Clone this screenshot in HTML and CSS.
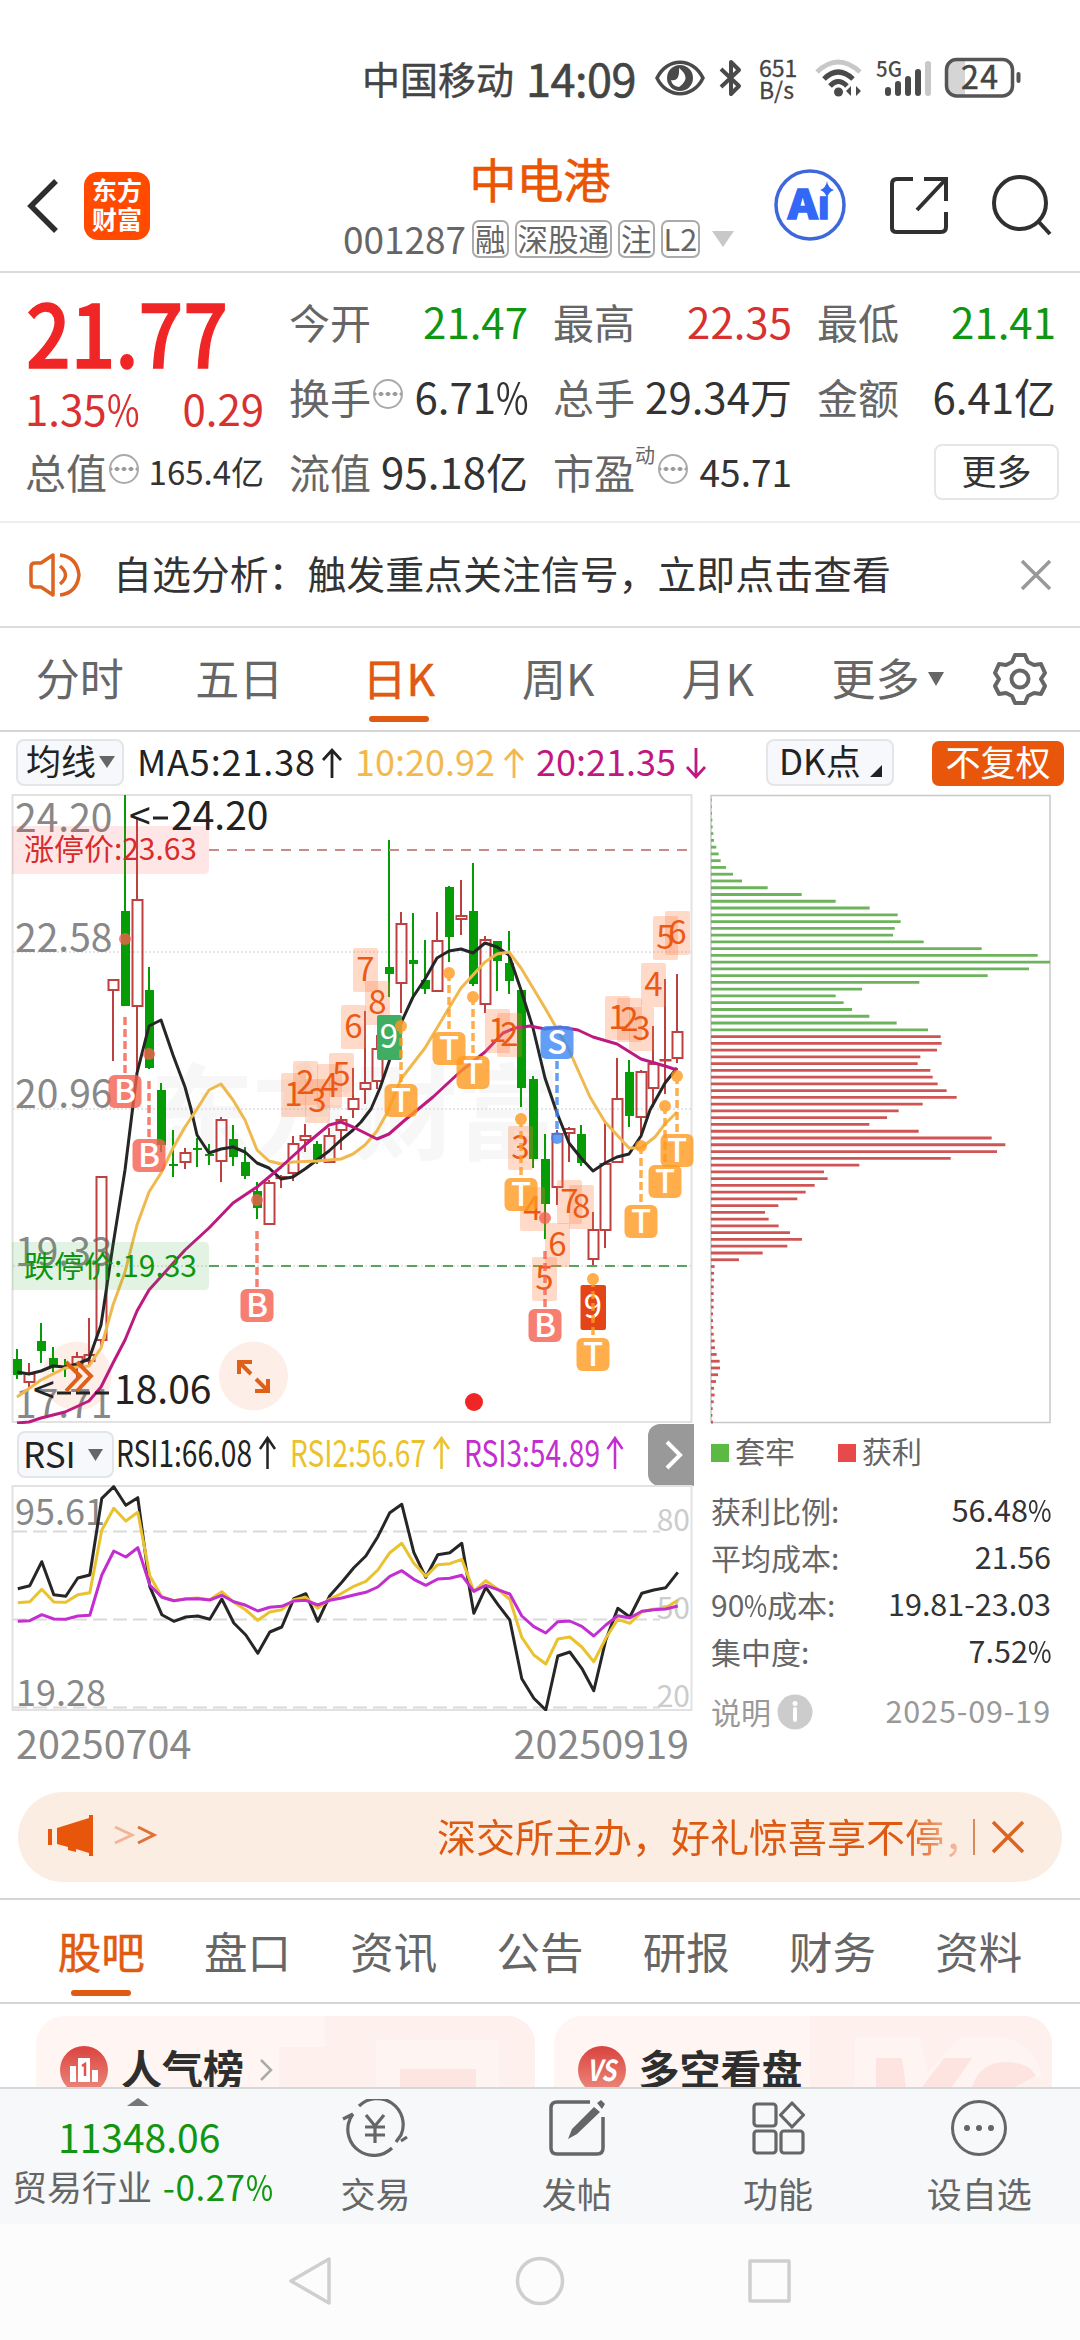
FILE: index.html
```html
<!DOCTYPE html>
<html lang="zh-CN">
<head>
    <meta charset="UTF-8">
    <meta name="viewport" content="width=device-width, initial-scale=1.0">
    <title>中电港 001287</title>
    <link rel="stylesheet" href="styles.css">
</head>
<body>
    <div class="status-bar">
        <span class="carrier">中国移动</span>
        <span class="clock">14:09</span>
        <svg class="st-eye" width="50" height="36" viewBox="0 0 50 36"><path d="M2 18C12 -3 38 -3 48 18C38 39 12 39 2 18Z" fill="none" stroke="#4a4a4a" stroke-width="3.500"/><circle cx="25" cy="18" r="13" fill="#4a4a4a"/><path d="M24 8Q37 18 24 27Q17 26 16 20Q25 22 24 8Z" fill="#fff"/></svg>
        <svg class="st-bt" width="24" height="38" viewBox="0 0 24 38"><path d="M2 10L20 27L12 35V3L20 11L2 28" fill="none" stroke="#4a4a4a" stroke-width="4" stroke-linejoin="round"/></svg>
        <span class="net-speed">651<br>B/s</span>
        <svg class="st-wifi" width="48" height="38" viewBox="0 0 48 38"><g fill="none" stroke-width="5"><path d="M2 13Q23-7 45 13" stroke="#c8c8c8"/><path d="M9 20Q23 6 38 20" stroke="#4a4a4a"/><path d="M15 27Q23 18 32 27" stroke="#4a4a4a"/></g><circle cx="23.500" cy="33" r="4.500" fill="#4a4a4a"/><path d="M31 32l5-5v10zM46 32l-5-5v10z" fill="#4a4a4a"/></svg>
        <svg class="st-signal" width="56" height="38" viewBox="0 0 56 38"><text x="0" y="18" font-size="22" font-weight="500" textLength="26" lengthAdjust="spacingAndGlyphs" fill="#4a4a4a">5G</text><g stroke-width="6" stroke-linecap="round"><path d="M12 34V31M22 34V25M32 34V20M42 34V13" stroke="#4a4a4a"/><path d="M52 34V5" stroke="#c8c8c8"/></g></svg>
        <svg class="st-battery" width="78" height="42" viewBox="0 0 78 42"><path d="M12 3H21V39H12Q2 39 2 29V13Q2 3 12 3Z" fill="#d5d5d5"/><rect x="2.500" y="2.500" width="66" height="36.500" rx="10" fill="none" stroke="#555" stroke-width="3.500"/><rect x="72.500" y="15" width="4" height="11" rx="2" fill="#555"/><text x="17" y="32" font-size="32" textLength="37" fill="#444" stroke="#444" stroke-width=".5">24</text></svg>
    </div>

    <div class="header">
        <div class="header-left">
            <svg width="34" height="56" viewBox="0 0 34 56"><path d="M30 3L5 28L30 53" fill="none" stroke="#2e2e2e" stroke-width="5.500"/></svg>
            <div class="logo">东方<br>财富</div>
        </div>
        <div class="header-title">
            <h1>中电港</h1>
            <div class="stock-code">
                <span>001287</span>
                <i class="tag">融</i><i class="tag">深股通</i><i class="tag">注</i><i class="tag">L2</i>
                <svg width="24" height="16" viewBox="0 0 24 16"><path d="M1 0H23L12 16Z" fill="#c8c8c8"/></svg>
            </div>
        </div>
        <div class="header-right">
            <svg width="74" height="74" viewBox="0 0 74 74"><circle cx="37" cy="37" r="34" fill="none" stroke="#3d68dc" stroke-width="3.500"/><text x="15" y="51" font-size="40" font-weight="900" fill="#3268f5" stroke="#3268f5" stroke-width="1.500" textLength="42" lengthAdjust="spacingAndGlyphs">Aı</text><path d="M54 13Q55 20 61 22Q55 24 54 31Q53 24 47 22Q53 20 54 13Z" fill="#3268f5"/></svg>
            <svg width="60" height="60" viewBox="0 0 60 60"><g fill="none" stroke="#303030" stroke-width="4"><path d="M24 4H8Q3 4 3 9V53Q3 57 8 57H52Q57 57 57 52V37"/><path d="M35 4H57V26M57 4L28 35"/></g></svg>
            <svg width="62" height="62" viewBox="0 0 62 62"><g fill="none" stroke="#303030" stroke-width="4"><circle cx="29" cy="29" r="26"/><path d="M47 47L59 60"/></g></svg>
        </div>
    </div>

    <div class="quote">
        <div class="price">21.77</div>
        <div class="q"><label>今开</label><b class="down">21.47</b></div>
        <div class="q"><label>最高</label><b class="up">22.35</b></div>
        <div class="q"><label>最低</label><b class="down">21.41</b></div>
        <div class="q change"><b class="up">1.35<em>%</em></b><b class="up">0.29</b></div>
        <div class="q"><label>换手</label><span class="more-dots"></span><b>6.71<em>%</em></b></div>
        <div class="q"><label>总手</label><b>29.34万</b></div>
        <div class="q"><label>金额</label><b>6.41亿</b></div>
        <div class="q"><label>总值</label><span class="more-dots"></span><b class="s">165.4亿</b></div>
        <div class="q"><label>流值</label><b>95.18亿</b></div>
        <div class="q"><label>市盈</label><sup>动</sup><span class="more-dots"></span><b class="m">45.71</b></div>
        <div class="q"><button class="btn-more">更多</button></div>
    </div>

    <div class="notice">
        <svg width="54" height="46" viewBox="0 0 54 46"><g fill="none" stroke="#dd6420" stroke-width="3.500"><path d="M24 3V43L12 35H6Q2 35 2 31V15Q2 11 6 11H12Z" stroke-linejoin="round"/><path d="M31 14Q42 23 31 32M31 3Q48 5 50 23Q48 41 31 43"/></g></svg>
        <p>自选分析：触发重点关注信号，立即点击查看</p>
        <svg width="32" height="32" viewBox="0 0 32 32"><path d="M2 2L30 30M30 2L2 30" stroke="#999" stroke-width="3.500"/></svg>
    </div>

    <div class="k-tabs">
        <span>分时</span><span>五日</span><span class="active">日K</span><span>周K</span><span>月K</span><span>更多<svg width="16" height="14" viewBox="0 0 16 14"><path d="M0 0H16L8 14Z" fill="#666"/></svg></span>
        <svg class="gear" width="54" height="54" viewBox="0 0 54 54"><g fill="none" stroke="#666" stroke-width="4" stroke-linejoin="round"><path d="M22 3H32L35 10L41 13L48 12L52 21L48 27L52 34L48 42L41 41L35 44L32 51H22L19 44L13 41L6 42L2 34L6 27L2 21L6 12L13 13L19 10Z"/><circle cx="27" cy="27" r="8.500"/></g></svg>
    </div>

    <div class="market">
        <div class="market-left">
            <div class="ma-bar">
                <div class="select">均线<svg width="16" height="12" viewBox="0 0 16 12"><path d="M0 0H16L8 12Z" fill="#666"/></svg></div>
                <svg class="ma-text" width="580" height="46" viewBox="0 0 580 46">
                    <g font-size="36"><text x="9" y="37" textLength="178" fill="#222">MA5:21.38</text><text x="227" y="37" textLength="140" fill="#f3b94e">10:20.92</text><text x="408" y="37" textLength="140" fill="#c0187f">20:21.35</text></g>
                    <g fill="none" stroke-width="2.800"><path d="M204 39V11M195 21L204 11L213 21" stroke="#222"/><path d="M386 39V11M377 21L386 11L395 21" stroke="#f3b94e"/><path d="M568 9V38M559 28L568 38L577 28" stroke="#c0187f"/></g>
                </svg>
            </div>
            <svg id="kline" class="chart" width="684" height="630" viewBox="10 794 684 630"></svg>
            <div class="rsi-bar">
                <div class="select">RSI<svg width="15" height="12" viewBox="0 0 15 12"><path d="M0 0H15L7.500 12Z" fill="#666"/></svg></div>
                <svg class="rsi-text" width="530" height="46" viewBox="116 1431 530 46">
                    <g font-size="37"><text x="116" y="1467" textLength="136" lengthAdjust="spacingAndGlyphs" fill="#222">RSI1:66.08</text><text x="290" y="1467" textLength="136" lengthAdjust="spacingAndGlyphs" fill="#ebc22c">RSI2:56.67</text><text x="464" y="1467" textLength="136" lengthAdjust="spacingAndGlyphs" fill="#c32ed0">RSI3:54.89</text></g>
                    <g fill="none" stroke-width="2.500"><path d="M267.500 1469V1438M260 1449L267.500 1438L275 1449" stroke="#222"/><path d="M441.500 1469V1438M434 1449L441.500 1438L449 1449" stroke="#ebc22c"/><path d="M615 1469V1438M607.500 1449L615 1438L622.500 1449" stroke="#c32ed0"/></g>
                </svg>
                <div class="next"><svg width="20" height="30" viewBox="0 0 20 30"><path d="M3 2L16 15L3 28" fill="none" stroke="#fff" stroke-width="4"/></svg></div>
            </div>
            <svg id="rsi" class="chart" width="684" height="226" viewBox="10 1485 684 226"></svg>
            <div class="dates"><span>20250704</span><span>20250919</span></div>
        </div>
        <div class="market-right">
            <div class="chip-bar">
                <div class="dk">DK点<svg width="12" height="12" viewBox="0 0 12 12"><path d="M12 0V12H0Z" fill="#222"/></svg></div>
                <div class="fq">不复权</div>
            </div>
            <svg id="chips" class="chart" width="342" height="630" viewBox="710 794 342 630"></svg>
            <div class="legend"><i class="g"></i>套牢<i class="r"></i>获利</div>
            <div class="cost"><span>获利比例:</span><b>56.48<em>%</em></b></div>
            <div class="cost"><span>平均成本:</span><b>21.56</b></div>
            <div class="cost"><span>90<em>%</em>成本:</span><b>19.81-23.03</b></div>
            <div class="cost"><span>集中度:</span><b>7.52<em>%</em></b></div>
            <div class="cost note"><span>说明</span><svg width="36" height="36" viewBox="0 0 36 36"><circle cx="18" cy="18" r="17.500" fill="#ccc"/><path d="M18 15V26" stroke="#fff" stroke-width="4" stroke-linecap="round"/><circle cx="18" cy="9.500" r="2.500" fill="#fff"/></svg><b>2025-09-19</b></div>
        </div>
    </div>

    <div class="banner">
        <svg width="110" height="44" viewBox="0 0 110 44"><path d="M0 14H4V30H0ZM9 13L41 3V0H45V41H41V38L28 34V37L20 35V32L9 29Z" fill="#e8560c"/><g fill="none" stroke-width="3"><path d="M67 12L84 20L67 28" stroke="#f2b596"/><path d="M90 12L106 20L90 28" stroke="#e07035"/></g></svg>
        <p>深交所主办，好礼惊喜享不停，</p>
        <i></i>
        <svg width="34" height="34" viewBox="0 0 34 34"><path d="M2 2L32 32M32 2L2 32" stroke="#dd6420" stroke-width="3.500"/></svg>
    </div>

    <div class="info-tabs">
        <span class="active">股吧</span><span>盘口</span><span>资讯</span><span>公告</span><span>研报</span><span>财务</span><span>资料</span>
    </div>

    <div class="cards">
        <div class="card">
            <svg width="48" height="48" viewBox="0 0 48 48"><defs><linearGradient id="badge" x1="0" y1="0" x2="0" y2="1"><stop offset="0" stop-color="#d9443f"/><stop offset="1" stop-color="#ee8c80"/></linearGradient></defs><circle cx="24" cy="24" r="24" fill="url(#badge)"/><path d="M10 20H16V36H10ZM18 12H30V36H18ZM32 24H38V36H32Z" fill="#fff"/><path d="M22 20L25 18V30" fill="none" stroke="#e0524b" stroke-width="2.500"/></svg>
            <span>人气榜</span>
            <svg width="14" height="24" viewBox="0 0 14 24"><path d="M2 2L12 12L2 22" fill="none" stroke="#aaa" stroke-width="2.500"/></svg>
            <svg class="card-bg" width="256" height="71" viewBox="0 0 256 71"><path d="M46 0H256V71H0V31H46Z" fill="#fef0ec"/><path d="M97 24H220V71H97Z" fill="#fef4f1"/><path d="M121 53H197V71H121Z" fill="#fde6e2"/></svg>
        </div>
        <div class="card">
            <svg width="48" height="48" viewBox="0 0 48 48"><circle cx="24" cy="24" r="24" fill="url(#badge)"/><text x="9" y="35" font-size="29" font-weight="700" font-style="italic" textLength="29" lengthAdjust="spacingAndGlyphs" fill="#fff">VS</text></svg>
            <span>多空看盘</span>
            <svg class="card-bg" width="242" height="71" viewBox="0 0 242 71"><path d="M0 0H242V71H0Z" fill="#fef0ec"/><path d="M45 21H110L118 56L150 21H190Q225 26 232 60L200 71H45Z" fill="#fef4f1"/><path d="M66 42H92L96 71H66ZM112 71L134 42H162L142 71ZM162 71Q170 46 196 46Q220 47 226 60L205 71Z" fill="#fde4e0"/></svg>
        </div>
    </div>

    <div class="bottom-bar">
        <div class="index">
            <svg width="22" height="8" viewBox="0 0 22 8"><path d="M11 0L22 8H0Z" fill="#777"/></svg>
            <div class="index-value">11348.06</div>
            <div class="index-name">贸易行业 <b>-0.27<em>%</em></b></div>
        </div>
        <div class="action">
            <svg width="66" height="58" viewBox="0 0 66 58"><g fill="none" stroke="#666" stroke-width="3.200"><path d="M17 7A26 26 0 0 1 59 36L54 43M59 42L65 38M50 49A26 26 0 0 1 8 20L11 15M1 20L11 15"/><path d="M24 16L33 27L42 16M33 27V44M23 28H43M23 36H43"/></g></svg>
            <span>交易</span>
        </div>
        <div class="action">
            <svg width="58" height="58" viewBox="0 0 58 58"><g fill="none" stroke="#666" stroke-width="3.500"><path d="M42 3H9Q3 3 3 9V49Q3 55 9 55H49Q55 55 55 49V18"/></g><path d="M46 8L52 13L29 35L20 40L24 30ZM49 4L53 1L57 5L54 10Z" fill="#666"/></svg>
            <span>发帖</span>
        </div>
        <div class="action">
            <svg width="54" height="56" viewBox="0 0 54 56"><g fill="none" stroke="#666" stroke-width="3.200"><rect x="3" y="4" width="22" height="22" rx="3"/><rect x="3" y="31" width="22" height="22" rx="3"/><rect x="30" y="31" width="22" height="22" rx="3"/><path d="M41 3L52.500 15L41 27L29.500 15Z" stroke-linejoin="round"/></g></svg>
            <span>功能</span>
        </div>
        <div class="action">
            <svg width="58" height="58" viewBox="0 0 58 58"><circle cx="29" cy="29" r="26.500" fill="none" stroke="#666" stroke-width="3"/><g fill="#666"><circle cx="17" cy="29" r="3"/><circle cx="29" cy="29" r="3"/><circle cx="41" cy="29" r="3"/></g></svg>
            <span>设自选</span>
        </div>
    </div>

    <div class="nav-bar">
        <svg width="504" height="50" viewBox="0 0 504 50"><g fill="none" stroke="#cfcfcf" stroke-width="3.500" stroke-linejoin="round"><path d="M41 3V47L3 25Z"/><circle cx="252" cy="25" r="22.500"/><rect x="462" y="5" width="39" height="40"/></g></svg>
    </div>

    <script src="script.js"></script>
</body>
</html>
```
FILE: styles.css
```css
* {
    box-sizing: border-box;
}
body {
    margin: 0;
    width: 1080px;
    height: 2340px;
    overflow: hidden;
    background: #fff;
    color: #333;
    font-family: "Noto Sans CJK SC", sans-serif;
    font-size: 42px;
    line-height: 1.2;
}
svg {
    display: block;
    flex: none;
}
svg text {
    font-family: "Noto Sans CJK SC", sans-serif;
}
b, i, h1, p, em {
    font-weight: 400;
    font-style: normal;
    margin: 0;
}
/* narrower percent sign */
em {
    display: inline-block;
    width: .76em;
    transform: scaleX(.84);
    transform-origin: left;
}

/* status bar */
.status-bar {
    display: flex;
    align-items: center;
    height: 116px;
    padding: 40px 58px 0 0;
    justify-content: flex-end;
    color: #444;
}
.carrier {
    font-size: 38px;
    -webkit-text-stroke: .4px #444;
}
.clock {
    font-size: 45px;
    letter-spacing: -.5px;
    margin-left: 12px;
    width: 111px;
    -webkit-text-stroke: .6px #444;
}
.st-eye { margin-left: 18px; }
.st-bt { margin-left: 14px; }
.net-speed {
    font-size: 23px;
    line-height: 22px;
    margin-left: 16px;
    width: 39px;
    -webkit-text-stroke: .3px #444;
}
.st-wifi { margin-left: 17px; }
.st-signal { margin-left: 13px; }
.st-battery { margin-left: 12px; }

/* header */
.header {
    display: grid;
    grid-template-columns: 330px 420px 330px;
    height: 157px;
    border-bottom: 2px solid #dcdcdc;
}
.header-left, .header-right {
    display: flex;
    align-items: center;
    height: 157px;
}
.header-left {
    padding: 22px 0 0 26px;
    gap: 24px;
}
.logo {
    width: 66px;
    height: 68px;
    border-radius: 14px;
    background: #ff4a00;
    color: #fff;
    font-size: 25px;
    font-weight: 700;
    line-height: 29px;
    text-align: center;
    padding-top: 3px;
}
.header-title {
    display: flex;
    flex-direction: column;
    align-items: center;
    padding-top: 33px;
}
.header-title h1 {
    font-size: 47px;
    line-height: 58px;
    color: #ea5504;
    -webkit-text-stroke: .6px #ea5504;
}
.stock-code {
    display: flex;
    align-items: center;
    margin: 13px 2px 0 0;
    font-size: 37px;
    line-height: 38px;
    color: #666;
    white-space: nowrap;
}
.stock-code > span { margin-top: -3px; }
.tag {
    height: 38px;
    margin-left: 6px;
    padding: 0 1px;
    border: 2px solid #aaa;
    border-radius: 7px;
    font-size: 30.5px;
    line-height: 32px;
}
.stock-code svg { margin-left: 11px; }
.header-right {
    justify-content: flex-end;
    gap: 42px;
    padding: 20px 27px 0 0;
}

/* quote panel */
.quote {
    display: grid;
    grid-template-columns: repeat(4, 237px);
    grid-auto-rows: 75px;
    column-gap: 27px;
    height: 250px;
    padding: 11px 0 0 26px;
    border-bottom: 2px solid #eee;
}
.price {
    font-size: 87px;
    font-weight: 500;
    line-height: 92px;
    color: #f02626;
    -webkit-text-stroke: 1.5px #f02626;
    transform: scaleX(.9);
    transform-origin: left;
}
.q {
    display: flex;
    align-items: center;
    white-space: nowrap;
}
.q label {
    color: #666;
    font-size: 41px;
    margin-left: -1px;
}
.q b { margin: 0 -1px 0 auto; }
.q b.s { font-size: 33px; }
.q b.m { font-size: 37px; }
.q sup {
    font-size: 20px;
    color: #666;
    margin-bottom: 34px;
}
.change { padding-top: 24px; }
.change b:first-child { margin-left: -1px; }
.q .up { color: #d93030; }
.q .down { color: #109610; }
.more-dots {
    width: 30px;
    height: 30px;
    margin: 0 0 5px 2px;
    border: 2px solid #aaa;
    border-radius: 50%;
    background:
        radial-gradient(circle, #999 2px, transparent 2.5px) center / 7px 26px repeat-x;
}
sup + .more-dots { margin-left: 3px; }
.btn-more {
    width: 125px;
    height: 56px;
    margin: 0 -4px 0 auto;
    padding: 0 0 4px;
    border: 2px solid #e6e6e6;
    border-radius: 8px;
    background: #fff;
    font: 35px "Noto Sans CJK SC", sans-serif;
    line-height: 48px;
    color: #333;
}

/* notice line */
.notice {
    display: flex;
    align-items: center;
    height: 105px;
    padding: 0 28px 0 29px;
    border-bottom: 2px solid #dcdcdc;
}
.notice p {
    flex: 1;
    margin-left: 30px;
    font-size: 38.9px;
    padding-bottom: 4px;
}

/* chart period tabs */
.k-tabs {
    display: flex;
    align-items: center;
    height: 104px;
    padding-right: 0;
    border-bottom: 2px solid #d5d5d5;
    font-size: 44px;
    color: #666;
}
.k-tabs span {
    display: flex;
    align-items: center;
    justify-content: center;
    position: relative;
    width: 159.5px;
    height: 100%;
    padding-bottom: 3px;
}
.k-tabs span:nth-child(6) { width: 180px; }
.k-tabs span svg { margin: 2px 0 0 8px; }
.k-tabs .gear { margin-left: 15px; }
.k-tabs .active, .info-tabs .active {
    color: #e05a12;
    -webkit-text-stroke: .5px #e05a12;
}
.k-tabs .active::after, .info-tabs .active::after {
    content: "";
    position: absolute;
    left: 50%;
    bottom: 8px;
    width: 60px;
    height: 6px;
    margin-left: -30px;
    border-radius: 3px;
    background: #e05a12;
}

/* charts */
.market {
    display: flex;
    height: 1060px;
}
.market-left { width: 710px; }
.market-right { width: 370px; }
.market-left .chart { margin-left: 10px; }
.ma-bar, .chip-bar {
    display: flex;
    height: 62px;
    padding-top: 7px;
}
.ma-bar { padding-left: 16px; }
.select, .dk {
    display: flex;
    align-items: center;
    flex: none;
    height: 47px;
    padding: 0 0 5px 8px;
    border: 2px solid #e2e5ea;
    border-radius: 8px;
    background: #f6f8fb;
    font-size: 35px;
    color: #222;
    white-space: nowrap;
}
.select svg { margin: 4px 0 0 3px; }
.ma-bar .select { width: 108px; }
.ma-text { margin-left: 4px; }
.chip-bar { padding-left: 56px; }
.dk {
    width: 128px;
    padding-left: 11px;
}
.dk svg { margin: 22px 0 0 9px; }
.fq {
    width: 132px;
    height: 45px;
    margin: 2px 0 0 38px;
    border-radius: 7px;
    background: #e8560c;
    color: #fff;
    font-size: 35px;
    line-height: 40px;
    text-align: center;
}
.rsi-bar {
    display: flex;
    height: 61px;
    padding: 7px 0 0 17px;
}
.rsi-bar .select {
    width: 97px;
    padding: 0 0 3px 4px;
    font-size: 35px;
}
.rsi-bar .select svg { margin-left: 12px; }
.rsi-text { margin-left: 2px; }
.next {
    width: 46px;
    height: 62px;
    margin: -7px 0 0 2px;
    padding: 16px 0 0 16px;
    border-radius: 12px 0 0 12px;
    background: #999;
}
.dates {
    display: flex;
    justify-content: space-between;
    padding: 7px 21px 0 16px;
    font-size: 39.5px;
    color: #888;
}
.market-right { font-size: 30px; }
.legend {
    display: flex;
    align-items: center;
    height: 52px;
    color: #666;
}
.legend i {
    width: 18px;
    height: 18px;
    margin: 5px 6px 0 1px;
}
.legend .g { background: #5cb944; }
.legend .r { background: #e84a4a; margin-left: 43px; }
.cost {
    display: flex;
    align-items: center;
    height: 47px;
    padding: 0 29px 0 1px;
    font-size: 30px;
    color: #666;
}
.cost b {
    margin-left: auto;
    font-size: 30.5px;
    color: #333;
}
.legend + .cost { margin-top: 10px; }
.note {
    margin-top: 13px;
    color: #999;
}
.note svg { margin: 2px 0 0 6px; }
.note b {
    color: #999;
    letter-spacing: .9px;
}

/* banner */
.banner {
    display: flex;
    align-items: center;
    height: 90px;
    margin: 0 18px;
    padding: 0 37px 4px 30px;
    border-radius: 45px;
    background: #fcede3;
    color: #dd5a12;
    font-size: 39px;
}
.banner p {
    width: 526px;
    margin-left: 279px;
    overflow: hidden;
    white-space: nowrap;
    -webkit-mask-image: linear-gradient(90deg, #000 470px, transparent 545px);
}
.banner i {
    width: 2px;
    height: 36px;
    margin: 4px 16px 0 11px;
    background: #dd8a5a;
}
.banner svg { margin-top: 4px; }

/* lower tabs and cards */
.info-tabs {
    display: flex;
    height: 106px;
    margin-top: 16px;
    padding: 0 28px;
    border-top: 2px solid #d5d5d5;
    border-bottom: 2px solid #d5d5d5;
    color: #666;
    font-size: 43.500px;
}
.info-tabs span {
    position: relative;
    flex: 1;
    height: 104px;
    line-height: 101px;
    text-align: center;
}
.cards {
    display: flex;
    gap: 19px;
    height: 83px;
    padding: 12px 28px 0 36px;
    overflow: hidden;
}
.card {
    display: flex;
    position: relative;
    flex: 1;
    height: 140px;
    padding: 30px 24px 0;
    border-radius: 28px;
    background: #fff6f3;
    overflow: hidden;
    font-size: 41px;
    color: #2e2e2e;
}
.card > * {
    position: relative;
    z-index: 1;
}
.card span {
    margin: -3px 0 0 13px;
    font-weight: 700;
}
.card span + svg { margin: 12px 0 0 15px; }
.card .card-bg {
    position: absolute;
    z-index: 0;
    right: 0;
    top: 0;
    margin: 0;
}

/* bottom bar */
.bottom-bar {
    display: flex;
    height: 137px;
    border-top: 2px solid #d5d8da;
    background: #f6f8fa;
    color: #666;
    font-size: 35px;
}
.index {
    width: 275px;
    padding: 9px 0 0 12px;
    white-space: nowrap;
}
.index svg { margin-left: 115px; }
.index-value {
    margin: 6px 0 0 46px;
    font-size: 39px;
    line-height: 48px;
    color: #109610;
}
.index-name {
    line-height: 48px;
    margin-top: 2px;
}
.index-name b {
    margin-left: 3px;
    font-size: 35px;
    letter-spacing: .5px;
    color: #109610;
}
.action {
    display: flex;
    flex-direction: column;
    align-items: center;
    width: 201.500px;
    padding-top: 10px;
}
.action svg { height: 58px; }
.action span { margin-top: 15px; }
.nav-bar {
    height: 116px;
    padding: 32px 0 0 288px;
    background: #fcfcfc;
}
```
FILE: script.js
```javascript
const RED = '#bd4141';
const GREEN = '#069c06';

// [high, low, body top, body bottom, up]
const candles = [
    [1349, 1379, 1359, 1375, 0], [1363, 1388, 1373, 1383, 1], [1323, 1363, 1341, 1351, 0], [1347, 1372, 1358, 1367, 0],
    [1359, 1377, 1366, 1367, 0], [1352, 1380, 1356, 1366, 1], [1318, 1367, 1354, 1362, 1], [1176, 1347, 1176, 1341, 1],
    [979, 1061, 979, 991, 1], [795, 1006, 911, 1006, 0], [817, 1080, 899, 1007, 1], [967, 1069, 990, 1068, 0],
    [1083, 1152, 1090, 1145, 0], [1130, 1177, 1164, 1166, 0], [1148, 1169, 1152, 1163, 1], [1138, 1167, 1148, 1150, 0],
    [1144, 1165, 1154, 1156, 0], [1117, 1182, 1119, 1162, 1], [1125, 1166, 1139, 1157, 0], [1147, 1179, 1162, 1176, 0],
    [1182, 1219, 1191, 1208, 0], [1180, 1225, 1182, 1225, 1], [1175, 1188, 1176, 1179, 1], [1136, 1181, 1143, 1174, 1],
    [1124, 1152, 1135, 1141, 1], [1141, 1164, 1144, 1162, 0], [1128, 1163, 1135, 1163, 1], [1116, 1150, 1119, 1131, 1],
    [1068, 1118, 1098, 1110, 1], [1011, 1104, 1082, 1090, 1], [1035, 1089, 1048, 1082, 1], [840, 997, 967, 974, 0],
    [912, 1013, 923, 984, 1], [913, 997, 960, 964, 0], [940, 994, 980, 989, 0], [912, 992, 940, 992, 1],
    [886, 962, 887, 937, 0], [880, 935, 915, 920, 1], [863, 986, 911, 984, 0], [936, 1013, 939, 1005, 1],
    [941, 991, 941, 961, 0], [931, 994, 963, 981, 0], [990, 1107, 990, 1088, 0], [1076, 1168, 1079, 1159, 0],
    [1134, 1239, 1159, 1204, 0], [1130, 1205, 1133, 1188, 1], [1127, 1162, 1128, 1134, 1], [1125, 1166, 1134, 1163, 0],
    [1212, 1267, 1229, 1260, 1], [1123, 1248, 1163, 1231, 1], [1058, 1163, 1098, 1163, 1], [1060, 1127, 1072, 1116, 0],
    [1070, 1135, 1071, 1118, 1], [1026, 1107, 1063, 1089, 1], [979, 1094, 1059, 1060, 1], [974, 1063, 1031, 1059, 1]
];

const ma5 = '17,1372 29,1374 41,1371 53,1366 65,1367 77,1364 89,1359 101,1325 113,1245 125,1170 137,1073 149,1026 161,1020 173,1055 185,1087 191,1109 197,1135 209,1153 221,1149 233,1147 245,1152 257,1163 269,1168 281,1179 293,1177 305,1169 317,1160 329,1151 341,1140 353,1130 361,1122 371,1109 380,1088 391,1056 401,1023 413,997 425,979 437,958 449,951 461,949 473,953 485,943 497,947 509,955 521,990 533,1028 545,1078 557,1113 569,1143 581,1158 593,1171 605,1163 617,1157 629,1154 641,1136 650,1110 665,1083 677,1068';
const ma10 = '17,1397 41,1380 65,1368 89,1366 101,1348 113,1305 125,1272 137,1225 149,1192 161,1173 173,1148 185,1127 197,1109 209,1090 221,1084 233,1100 245,1120 257,1150 269,1161 281,1164 293,1162 317,1161 329,1160 341,1159 353,1154 365,1145 377,1131 387,1113 401,1079 425,1048 461,988 485,962 497,954 509,952 521,968 545,1008 569,1050 590,1097 605,1122 629,1148 641,1148 655,1137 665,1124 677,1112';
const ma20 = '17,1423 29,1422 41,1418 65,1412 89,1401 101,1387 113,1363 125,1340 137,1311 149,1290 185,1250 209,1228 233,1203 257,1187 281,1167 305,1145 329,1125 341,1122 353,1127 365,1133 377,1139 389,1134 405,1120 433,1097 461,1071 485,1052 503,1033 515,1028 530,1026 545,1029 560,1027 578,1030 593,1037 617,1044 641,1059 665,1066 677,1070';

// nine-turn counters: digit, left, top
const counters = [
    [1, 281, 1073], [2, 293, 1061], [3, 305, 1079], [4, 317, 1064], [5, 329, 1053], [6, 341, 1005], [7, 353, 948], [8, 365, 981],
    [1, 485, 1009], [2, 497, 1013], [3, 508, 1126], [4, 520, 1187], [5, 532, 1257], [6, 545, 1223], [7, 557, 1180], [8, 569, 1185],
    [1, 605, 996], [2, 617, 998], [3, 629, 1007], [4, 641, 963], [5, 653, 916], [6, 665, 911]
];

// signal badges: letter, center x, badge top, line start, dot y
const signals = [
    ['B', 125, 1075, 1017, 939], ['B', 149, 1139, 1081, 1054], ['B', 257, 1289, 1231, 1200], ['B', 545, 1309, 1251, 1218],
    ['T', 401, 1084, 1026, 1026], ['T', 449, 1032, 973, 973], ['T', 473, 1056, 997, 997], ['T', 521, 1178, 1119, 1119],
    ['T', 593, 1338, 1279, 1279], ['T', 641, 1205, 1146, 1146], ['T', 665, 1165, 1106, 1106], ['T', 677, 1134, 1076, 1076],
    ['S', 557, 1026, 1061, 1138]
];
const signalColors = { B: '#f5604f', T: '#ff9a1f', S: '#3b87f3' };

function line(x1, y1, x2, y2, color, width, dash) {
    return `<line x1="${x1}" y1="${y1}" x2="${x2}" y2="${y2}" stroke="${color}" stroke-width="${width}" stroke-dasharray="${dash || 'none'}"/>`;
}

function text(x, y, size, color, str, extra) {
    return `<text x="${x}" y="${y}" font-size="${size}" fill="${color}" ${extra || ''}>${str}</text>`;
}

function polyline(points, color) {
    return `<polyline points="${points}" fill="none" stroke="${color}" stroke-width="3" stroke-linejoin="round"/>`;
}

function drawKline() {
    let s = text(150, 1152, 104, '#f7f7f7', '东方财富', 'font-weight="700" textLength="410"');
    [952, 1109, 1266].forEach(y => { s += line(13, y, 691, y, '#dedede', 1.5, '2 2'); });
    s += '<rect x="12.500" y="795" width="679" height="627" fill="none" stroke="#e2e2e2" stroke-width="2"/>';
    s += '<circle cx="77" cy="1376" r="34.500" fill="#fdeee7"/><circle cx="253.500" cy="1376" r="34.500" fill="#fdeee7"/>';
    s += text(15, 832, 39, '#888', '24.20') + text(15, 952, 39, '#888', '22.58') + text(15, 1108, 39, '#888', '20.96')
        + text(15, 1266, 39, '#888', '19.33') + text(15, 1418, 39, '#888', '17.71');

    candles.forEach(([high, low, top, bottom, up], i) => {
        const x = 17 + i * 12;
        if (up) {
            s += line(x, high, x, top, RED, 2) + line(x, bottom, x, low, RED, 2);
            s += `<rect x="${x - 4.5}" y="${top + 1}" width="10" height="${Math.max(bottom - top - 2, 0.5)}" fill="none" stroke="${RED}" stroke-width="2"/>`;
        } else {
            s += line(x, high, x, low, GREEN, 2);
            s += `<rect x="${x - 4}" y="${top}" width="9" height="${bottom - top}" fill="${GREEN}"/>`;
        }
    });

    s += polyline(ma5, '#262626') + polyline(ma10, '#f0b94f') + polyline(ma20, '#bd1a80');

    // limit up / limit down
    s += '<path d="M12 826H204Q209 826 209 831V869Q209 874 204 874H12Z" fill="#ff4040" fill-opacity=".13"/>';
    s += '<path d="M12 1242H204Q209 1242 209 1247V1285Q209 1290 204 1290H12Z" fill="#20a030" fill-opacity=".13"/>';
    s += line(209, 850, 688, 850, '#c98a8a', 2, '10 8') + line(209, 1266, 688, 1266, '#5aa35a', 2, '10 8');
    s += text(24, 860, 30, '#d82c2c', '涨停价:23.63', 'textLength="173"') + text(24, 1277, 30, '#0d960d', '跌停价:19.33', 'textLength="173"');

    s += text(129, 830, 39, '#222', '&lt;') + line(153, 818, 168, 818, '#222', 3) + text(171, 830, 39, '#222', '24.20');
    s += text(33, 1404, 39, '#222', '&lt;') + line(57, 1393, 109, 1393, '#222', 3, '14 5') + text(114, 1404, 39, '#222', '18.06');

    counters.forEach(([n, x, y]) => {
        s += `<rect x="${x}" y="${y}" width="25" height="44" rx="2" fill="#ff7a3c" fill-opacity=".28"/>`;
    });
    counters.forEach(([n, x, y]) => { s += text(x + 12.5, y + 33, 33, '#ea5a14', n, 'text-anchor="middle"'); });
    s += '<rect x="377" y="1015" width="25" height="45" rx="2" fill="#3fae62"/>' + text(389, 1048, 33, '#fff', '9', 'text-anchor="middle"');
    s += '<rect x="580.500" y="1285" width="25.500" height="45" rx="2" fill="#e34516"/>' + text(593, 1318, 33, '#fff', '9', 'text-anchor="middle"');

    signals.forEach(([letter, x, top, start, dot]) => {
        const c = signalColors[letter];
        const end = letter === 'S' ? dot : top;
        s += `<g opacity=".8">${line(x, start, x, end, c, 3.5, '8 4')}`;
        s += `<circle cx="${x}" cy="${dot}" r="6" fill="${c}"/>`;
        s += `<rect x="${x - 16.5}" y="${top}" width="33" height="33" rx="6" fill="${c}"/></g>`;
        s += text(x, top + 28, 33, '#fff', letter, 'text-anchor="middle" font-weight="500"');
    });

    s += '<g fill="none" stroke="#e0601a" stroke-width="4"><path d="M66 1362L80 1376L66 1391M77 1362L91 1376L77 1391"/>';
    s += '<path d="M239 1374V1362H252M239 1362L251 1374M255 1391H268V1379M268 1391L256 1379"/></g>';
    s += '<circle cx="474" cy="1402" r="9" fill="#f02626"/>';
    document.getElementById('kline').innerHTML = s;
}

// bar lengths in thirds of a pixel, top to bottom
const chips = [2, 2, 3, 4, 5, 7, 9, 16, 23, 29, 45, 66, 93, 170, 272, 374, 476, 560, 569, 551, 546, 638, 812, 980, 1017, 954, 830, 625, 453, 374, 398, 423, 475, 557, 651,
    689, 692, 678, 628, 620, 658, 665, 680, 707, 737, 635, 563, 528, 475, 623, 842, 883, 858, 719, 445, 339, 350, 311, 284, 259, 202, 162, 173, 203, 237, 273, 229, 155, 84,
    11, 9, 9, 8, 8, 8, 8, 6, 6, 7, 8, 11, 12, 17, 26, 27, 21, 15, 9, 11, 8, 5, 4, 6];
const GREEN_BARS = 35;

function drawChips() {
    let s = '<rect x="711" y="795.500" width="339" height="627" fill="none" stroke="#c8c8c8" stroke-width="1.500"/>';
    chips.forEach((w, i) => {
        const y = 799.8 + i * 6.764;
        s += line(711, y, 711 + w / 3, y, i < GREEN_BARS ? '#6cb35c' : '#cf5555', 2.8);
    });
    document.getElementById('chips').innerHTML = s;
}

// offsets in thirds of a pixel from y = 1420
const rsi1 = [506, 497, 425, 524, 529, 474, 465, 235, 200, 256, 233, 500, 584, 604, 591, 588, 598, 537, 609, 645, 700, 636, 621, 536, 521, 604, 527, 487, 443, 408, 350, 278, 253, 397, 472, 404, 398, 370, 580, 502, 553, 600, 776, 835, 870, 708, 696, 745, 812, 660, 565, 591, 520, 510, 503, 457];
const rsi2 = [548, 545, 508, 546, 547, 524, 518, 330, 265, 303, 277, 467, 530, 542, 536, 534, 539, 515, 547, 570, 601, 576, 569, 539, 532, 565, 537, 520, 499, 484, 450, 398, 370, 430, 469, 434, 431, 418, 514, 482, 508, 538, 652, 705, 732, 657, 651, 681, 725, 655, 598, 610, 575, 568, 563, 541];
const rsi3 = [604, 602, 584, 597, 598, 588, 586, 465, 393, 411, 383, 495, 532, 542, 537, 536, 540, 526, 545, 556, 573, 562, 559, 543, 541, 555, 541, 534, 525, 517, 501, 469, 452, 478, 496, 477, 475, 466, 514, 496, 509, 522, 588, 620, 639, 605, 603, 619, 648, 615, 587, 594, 574, 569, 567, 558];

function drawRsi() {
    let s = '<rect x="12.500" y="1486" width="679" height="224" fill="none" stroke="#e2e2e2" stroke-width="2"/>';
    [1531.5, 1619.5, 1707.5].forEach(y => { s += line(13, y, 660, y, '#dadada', 2, '14 6'); });
    s += text(690, 1531, 30, '#ccc', '80', 'text-anchor="end"') + text(690, 1619, 30, '#ccc', '50', 'text-anchor="end"') + text(690, 1707, 30, '#ccc', '20', 'text-anchor="end"');
    s += text(15, 1525, 36, '#888', '95.61') + text(16, 1706, 36, '#888', '19.28');
    [[rsi1, '#262626'], [rsi2, '#eac22e'], [rsi3, '#c32ed0']].forEach(([data, color]) => {
        s += polyline(data.map((v, i) => `${17.8 + i * 12},${(1420 + v / 3).toFixed(1)}`).join(' '), color);
    });
    document.getElementById('rsi').innerHTML = s;
}

drawKline();
drawChips();
drawRsi();
```
